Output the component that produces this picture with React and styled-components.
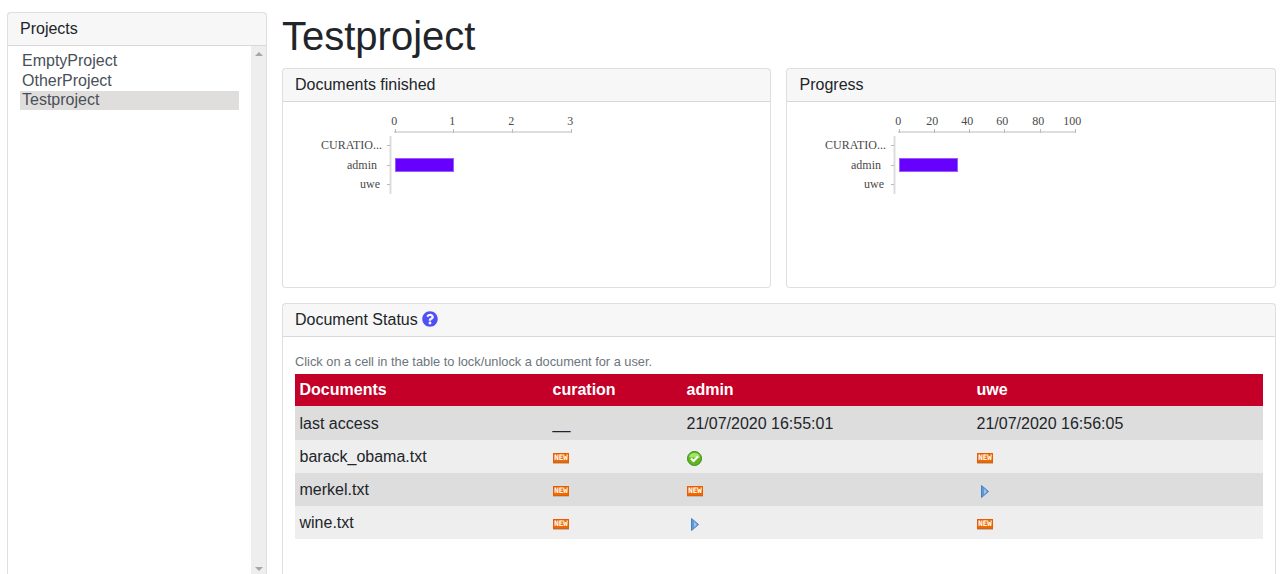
import React from 'react'
import styled, { createGlobalStyle } from 'styled-components'
import { FaQuestionCircle } from 'react-icons/fa'

const GlobalStyle = createGlobalStyle`
html, body {
  margin: 0;
  height: 100%;
  overflow: hidden;
  background: #fff;
}
body {
  font-family: "Liberation Sans", Arial, sans-serif;
  font-size: 16px;
  line-height: 1.5;
  color: #212529;
}
`

const users = [
  { name: 'CURATIO...', right: 99, y: 43.5 },
  { name: 'admin', right: 94, y: 63.5 },
  { name: 'uwe', right: 97, y: 82.5 },
]

const Chart = ({ ticks }) => {
  const step = 176.5 / (ticks.length - 1)
  return (
    <ChartSvg width="320" height="100" viewBox="0 0 320 100">
      <line x1="111" x2="289" y1="30" y2="30" stroke="#ddd" strokeWidth="2" />
      <line x1="107.5" x2="107.5" y1="34" y2="92" stroke="#ddd" strokeWidth="2" />
      {ticks.map((t, i) => {
        const x = Math.round(111.5 + i * step) + 0.5
        return (
          <g key={t}>
            <line x1={x} x2={x} y1="27" y2="31" stroke="#bbb" />
            <text x={x - String(t).length - 0.2} y="23" textAnchor="middle">{t}</text>
          </g>
        )
      })}
      {users.map(u => (
        <g key={u.name}>
          <line x1="104" x2="107" y1={u.y} y2={u.y} stroke="#bbb" />
          <text x={u.right} y={u.y + 3.5} textAnchor="end">{u.name}</text>
        </g>
      ))}
      <rect x="112.5" y="56.5" width="58" height="13" fill="#6600ff" stroke="#9a5cf5" />
    </ChartSvg>
  )
}

const CheckIcon = () => (
  <IconSvg width="15" height="15" viewBox="0 0 15 15">
    <circle cx="7.5" cy="7.5" r="7" fill="#62b51f" stroke="#35901a" />
    <path d="M2 6.5a5.5 4.5 0 0 1 11 0z" fill="#a5e566" />
    <path d="M4 7.5l2.5 2.5 4.5-4.5" fill="none" stroke="#fff" strokeWidth="2.2" />
  </IconSvg>
)

const PlayIcon = () => (
  <PlaySvg width="8" height="13" viewBox="0 0 8 13">
    <path d="M0.5 0.5L7.5 6.5 0.5 12.5z" fill="#5c9ad8" stroke="#4a80c0" />
    <path d="M3 3.5L6 6.5 3 9.5z" fill="#9cc4ee" />
  </PlaySvg>
)

const rows = [
  ['barack_obama.txt', 'new', 'done', 'new'],
  ['merkel.txt', 'new', 'new', 'play'],
  ['wine.txt', 'new', 'play', 'new'],
]

const StateIcon = ({ state }) => {
  if (state === 'done') return <CheckIcon />
  if (state === 'play') return <PlayIcon />
  return <NewBadge>NEW</NewBadge>
}

export default function App() {
  return (
    <>
      <GlobalStyle />
      <Page>
        <Sidebar>
          <CardHeader>Projects</CardHeader>
          <SideBody>
            <ProjectList>
              <ProjectItem>EmptyProject</ProjectItem>
              <ProjectItem>OtherProject</ProjectItem>
              <ProjectItem selected>Testproject</ProjectItem>
            </ProjectList>
            <Scrollbar>
              <ArrowUp />
              <ArrowDown />
            </Scrollbar>
          </SideBody>
        </Sidebar>
        <Main>
          <Title>Testproject</Title>
          <ChartRow>
            <ChartCard>
              <CardHeader>Documents finished</CardHeader>
              <Chart ticks={[0, 1, 2, 3]} />
            </ChartCard>
            <ChartCard>
              <ProgressHeader>Progress</ProgressHeader>
              <Chart ticks={[0, 20, 40, 60, 80, 100]} />
            </ChartCard>
          </ChartRow>
          <StatusCard>
            <CardHeader>
              Document Status <HelpIcon />
            </CardHeader>
            <StatusBody>
              <Hint>Click on a cell in the table to lock/unlock a document for a user.</Hint>
              <Table>
                <colgroup>
                  <col width="253" />
                  <col width="134" />
                  <col width="290" />
                  <col width="291" />
                </colgroup>
                <thead>
                  <tr>
                    <Th>Documents</Th>
                    <Th>curation</Th>
                    <Th>admin</Th>
                    <Th>uwe</Th>
                  </tr>
                </thead>
                <tbody>
                  <AccessRow>
                    <AccessCell>last access</AccessCell>
                    <AccessCell>__</AccessCell>
                    <AccessCell>21/07/2020 16:55:01</AccessCell>
                    <AccessCell>21/07/2020 16:56:05</AccessCell>
                  </AccessRow>
                  {rows.map((r, i) => (
                    <DocRow key={r[0]} dark={i % 2 === 1}>
                      <Td>{r[0]}</Td>
                      <IconCell><StateIcon state={r[1]} /></IconCell>
                      <IconCell><StateIcon state={r[2]} /></IconCell>
                      <IconCell><StateIcon state={r[3]} /></IconCell>
                    </DocRow>
                  ))}
                </tbody>
              </Table>
            </StatusBody>
          </StatusCard>
        </Main>
      </Page>
    </>
  )
}

const Page = styled.div`
display: flex;
align-items: flex-start;
gap: 15px;
padding: 12px 9px 0 7px;
`

const Card = styled.div`
border: 1px solid rgba(0, 0, 0, 0.125);
border-radius: 4px;
background: #fff;
box-sizing: border-box;
`

const Sidebar = styled(Card)`
width: 260px;
flex: none;
height: 640px;
`

const CardHeader = styled.div`
height: 32px;
line-height: 31px;
padding: 0 12px;
background: rgba(0, 0, 0, 0.03);
border-bottom: 1px solid rgba(0, 0, 0, 0.125);
`

const ProgressHeader = styled(CardHeader)`
padding-left: 12.5px;
`

const SideBody = styled.div`
display: flex;
justify-content: space-between;
height: 528px;
`

const ProjectList = styled.div`
width: 219px;
padding: 5px 0 0 12px;
`

const ProjectItem = styled.div`
height: 19.5px;
line-height: 19.5px;
padding-left: 2px;
color: #495057;
background: ${p => (p.selected ? 'linear-gradient(#e0dedd, #e0dedd) no-repeat 0 1px' : 'transparent')};
`

const Scrollbar = styled.div`
width: 15px;
background: #eee;
display: flex;
flex-direction: column;
justify-content: space-between;
align-items: center;
padding: 6px 0 3px;
box-sizing: border-box;
`

const ArrowUp = styled.div`
border-left: 4px solid transparent;
border-right: 4px solid transparent;
border-bottom: 4px solid #a6a6a6;
`

const ArrowDown = styled.div`
border-left: 4px solid transparent;
border-right: 4px solid transparent;
border-top: 4px solid #a6a6a6;
`

const Main = styled.div`
flex: 1;
min-width: 0;
`

const Title = styled.h1`
margin: 0;
height: 56px;
font-size: 40px;
font-weight: 500;
line-height: 48px;
`

const ChartRow = styled.div`
display: grid;
grid-template-columns: 489px 1fr;
gap: 15px;
margin-bottom: 15px;
`

const ChartCard = styled(Card)`
height: 220px;
`

const ChartSvg = styled.svg`
display: block;
text {
  font-family: "Liberation Serif", serif;
  font-size: 12px;
  fill: #4a4a4a;
}
`

const StatusCard = styled(Card)`
height: 300px;
`

const HelpIcon = styled(FaQuestionCircle)`
width: 16px;
height: 16px;
color: #4f4ff5;
vertical-align: -2px;
`

const StatusBody = styled.div`
padding: 15px 12px 0;
`

const Hint = styled.div`
font-size: 12.8px;
line-height: 19.2px;
margin-bottom: 3px;
color: #6c757d;
`

const Table = styled.table`
width: 968px;
border-collapse: collapse;
table-layout: fixed;
`

const Th = styled.th`
height: 32px;
padding: 0 4.5px;
background: #c40028;
color: #fff;
font-weight: 700;
text-align: left;
`

const Td = styled.td`
padding: 0 4.5px;
`

const AccessCell = styled(Td)`
padding-top: 2px;
`

const IconCell = styled(Td)`
padding-left: 5px;
padding-top: 3px;
line-height: 0;
`

const AccessRow = styled.tr`
height: 34px;
background: #ddd;
`

const DocRow = styled.tr`
height: 33px;
background: ${p => (p.dark ? '#ddd' : '#eee')};
`

const NewBadge = styled.span`
display: inline-block;
width: 16px;
height: 10px;
box-sizing: border-box;
border: 1px solid #e65c00;
background: #f06a00;
box-shadow: 0 1px 0 #bdbdbd;
color: #fff;
font-family: "DejaVu Sans Mono", monospace;
font-size: 7.5px;
font-weight: 700;
line-height: 8px;
text-align: center;
vertical-align: middle;
white-space: nowrap;
`

const IconSvg = styled.svg`
display: inline-block;
vertical-align: middle;
`

const PlaySvg = styled(IconSvg)`
margin-left: 4px;
`
